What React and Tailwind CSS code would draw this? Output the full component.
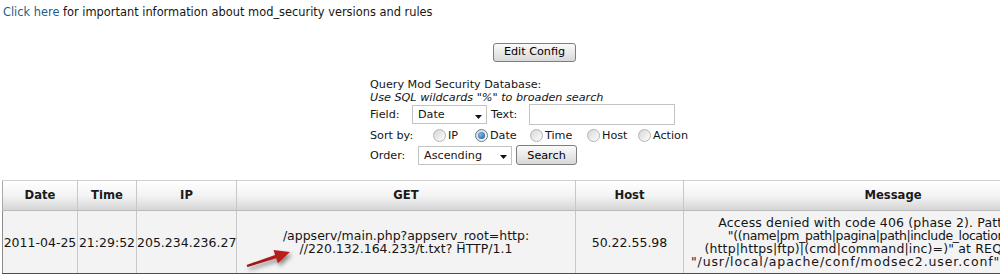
const COLS = [75, 59, 100, 339, 108, 419];

function Radio({ checked }) {
  return (
    <span
      className={
        "inline-flex h-[13px] w-[13px] shrink-0 items-center justify-center rounded-full border " +
        (checked
          ? "border-[#6a7a88] bg-linear-to-br from-[#c9d3dc] to-white"
          : "border-[#b4b4b4] bg-linear-to-br from-[#d6d6d6] to-white")
      }
    >
      {checked && (
        <span className="h-[7px] w-[7px] rounded-full bg-radial-[at_35%_35%] from-[#7fb8e6] to-[#1c5a94]" />
      )}
    </span>
  );
}

function SelectBox({ value, width }) {
  return (
    <div
      className="flex h-[19px] items-center justify-between border border-[#c3c3c3] bg-white pl-[5px] pr-[4px]"
      style={{ width }}
    >
      <span>{value}</span>
      <svg width="7" height="4" viewBox="0 0 7 4" className="mt-[4px]">
        <path d="M0 0 H7 L3.5 4 Z" fill="#111" />
      </svg>
    </div>
  );
}

function Button({ children, className = "" }) {
  return (
    <button
      className={
        "flex items-center justify-center rounded-[3px] border border-[#7d7d7d] bg-linear-to-b from-[#fbfbfb] to-[#d8d8d8] text-[11.2px] text-black " +
        className
      }
    >
      {children}
    </button>
  );
}

const SORTS = [
  { label: "IP", w: 42 },
  { label: "Date", w: 55, checked: true },
  { label: "Time", w: 57 },
  { label: "Host", w: 51 },
  { label: "Action", w: 60 },
];

export default function App() {
  return (
    <div className="relative h-[277px] w-[1000px] overflow-hidden bg-white font-['DejaVu_Sans',sans-serif] text-[#151515]">
      <p className="pl-[3px] pt-[5px] text-[11.4px] leading-[14px]">
        <a className="text-[#1d5f8a]">Click here</a> for important information about mod_security versions and rules
      </p>

      <Button className="ml-[493px] mt-[24px] h-[19px] w-[83px]">Edit Config</Button>

      <div className="ml-[370px] mt-[16px] text-[11.2px] leading-[13px]">
        <div>Query Mod Security Database:</div>
        <div className="italic">Use SQL wildcards "%" to broaden search</div>
        <div className="flex h-[21px] items-center">
          <span className="w-[42px]">Field:</span>
          <SelectBox value="Date" width={75} />
          <span className="ml-[4px] w-[38px]">Text:</span>
          <input className="h-[21px] w-[146px] border border-[#c3c3c3] bg-white" />
        </div>
        <div className="mt-[1px] flex h-[19px] items-center">
          <span className="w-[63px]">Sort by:</span>
          {SORTS.map((s) => (
            <span key={s.label} className="flex items-center gap-[2px]" style={{ width: s.w }}>
              <Radio checked={s.checked} />
              <span>{s.label}</span>
            </span>
          ))}
        </div>
        <div className="flex h-[20px] items-center">
          <span className="w-[48px]">Order:</span>
          <SelectBox value="Ascending" width={94} />
          <Button className="ml-[4px] h-[20px] w-[61px]">Search</Button>
        </div>
      </div>

      <table className="ml-[2px] mt-[15px] w-[1100px] table-fixed border-collapse">
        <colgroup>
          {COLS.map((w, i) => (
            <col key={i} style={{ width: w }} />
          ))}
        </colgroup>
        <thead>
          <tr className="bg-linear-to-b from-white via-[#f3f3f3] to-[#d3d3d3]">
            {["Date", "Time", "IP", "GET", "Host", "Message"].map((h) => (
              <th
                key={h}
                className="h-[30px] border border-t-[#d0d0d0] border-x-[#c8c8c8] border-b-[#bcbcbc] text-center text-[11.6px] font-bold text-[#1a1a1a] first:border-l-[#a8a8a8]"
              >
                {h}
              </th>
            ))}
          </tr>
        </thead>
        <tbody>
          <tr className="bg-[#f3f3f3] text-[12.5px] leading-[13px]">
            <td className="h-[63px] border border-x-[#c8c8c8] border-l-[#8c8c8c] border-b-[#4d4d4d] px-0 text-center">
              2011-04-25
            </td>
            <td className="border border-x-[#c8c8c8] border-b-[#4d4d4d] px-0 text-center">21:29:52</td>
            <td className="border border-x-[#c8c8c8] border-b-[#4d4d4d] px-0 text-center">205.234.236.27</td>
            <td className="border border-x-[#c8c8c8] border-b-[#4d4d4d] text-center">
              /appserv/main.php?appserv_root=http:
              <br />
              //220.132.164.233/t.txt? HTTP/1.1
            </td>
            <td className="border border-x-[#c8c8c8] border-b-[#4d4d4d] text-center">50.22.55.98</td>
            <td className="whitespace-nowrap border border-x-[#c8c8c8] border-b-[#4d4d4d] text-center">
              <div className="tracking-[0.15px]">Access denied with code 406 (phase 2). Pattern match</div>
              <div className="tracking-[-0.4px]">"((name|pm_path|pagina|path|include_location|root|p)=</div>
              <div className="tracking-[0.15px]">(http|https|ftp)|(cmd|command|inc)=)" at REQUEST_URI. [f</div>
              <div className="tracking-[0.9px]">"/usr/local/apache/conf/modsec2.user.conf"] [line "12"] [</div>
            </td>
          </tr>
        </tbody>
      </table>

      <svg
        width="56"
        height="30"
        viewBox="0 0 56 30"
        className="absolute left-[240px] top-[242px] drop-shadow-[2px_3px_2px_rgba(0,0,0,0.45)]"
      >
        <defs>
          <linearGradient id="arr" x1="0" y1="0" x2="1" y2="0">
            <stop offset="0" stopColor="#9c1010" />
            <stop offset="1" stopColor="#c42020" />
          </linearGradient>
        </defs>
        <polygon
          points="6.6,22.9 35.1,12.9 33.5,7.9 50,10 37.9,21.3 36.3,16.3 7.4,25.1"
          fill="url(#arr)"
        />
      </svg>
    </div>
  );
}
